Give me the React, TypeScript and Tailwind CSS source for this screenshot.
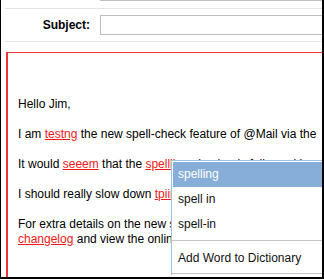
import React from 'react';

const Miss: React.FC<{ children: React.ReactNode }> = ({ children }) => (
  <span className="text-[#f01818] underline decoration-[#f01818]">{children}</span>
);

const menuItems = ['spelling', 'spell in', 'spell-in'];

export default function App() {
  return (
    <div className="relative w-[324px] h-[279px] overflow-hidden bg-white border-l border-r-2 border-b-2 border-black font-['Liberation_Sans',Arial,sans-serif] text-[12px] text-black">
      {/* previous field's bottom edge */}
      <div className="ml-[99px] h-px bg-[#bdbdbd]" />
      <div className="mt-[7px] ml-[4px] h-px bg-[#e4e4e4]" />

      {/* Subject row */}
      <div className="mt-[6px] flex items-center h-[20px]">
        <label className="w-[89px] shrink-0 text-right font-bold text-[12px]">Subject:</label>
        <div className="ml-[10px] w-[240px] h-[20px] shrink-0 border border-[#bdbdbd] bg-white" />
      </div>
      <div className="mt-[6px] ml-[4px] h-px bg-[#e4e4e4]" />

      {/* Editor area */}
      <div className="mt-[10px] ml-[5px] w-[340px] h-[240px] border-t border-l-2 border-[#f03434] pl-[10px] pt-[44px] leading-[15px] whitespace-nowrap">
        <div>Hello Jim,</div>
        <div>&nbsp;</div>
        <div>
          I am <Miss>testng</Miss> the new spell-check feature of @Mail via the
        </div>
        <div>&nbsp;</div>
        <div>
          It would <Miss>seeem</Miss> that the <Miss>spellling</Miss> checker is fully working
        </div>
        <div>&nbsp;</div>
        <div>
          I should really slow down <Miss>tpiing</Miss> so fast
        </div>
        <div>&nbsp;</div>
        <div>For extra details on the new spell-checker, read the</div>
        <div>
          <Miss>changelog</Miss> and view the online help
        </div>
      </div>

      {/* Suggestion menu */}
      <div className="absolute left-[170px] top-[160px] w-[200px] bg-white border-t border-l border-[#9dc0e3] p-px text-[12px] text-[#111]">
        {menuItems.map((item, i) => (
          <div
            key={item}
            className={`h-[25px] leading-[25px] pl-[5px] ${i === 0 ? 'bg-[#86aed8] text-white' : ''}`}
          >
            {item}
          </div>
        ))}
        <div className="mt-[3px] -ml-px h-px bg-[#c4c4c4]" />
        <div className="mt-[5px] h-[25px] leading-[25px] pl-[5px]">Add Word to Dictionary</div>
        <div className="mt-[2px] -ml-px h-px bg-[#c4c4c4]" />
      </div>
    </div>
  );
}
